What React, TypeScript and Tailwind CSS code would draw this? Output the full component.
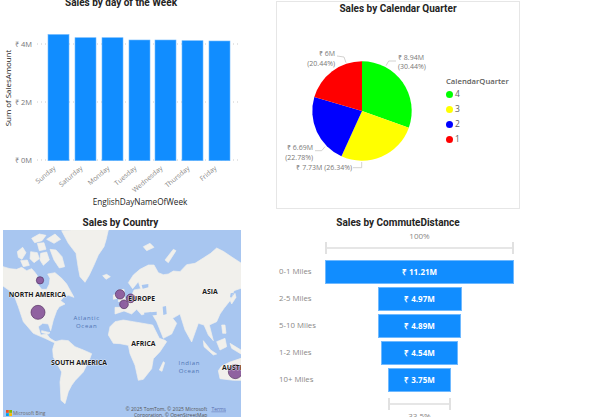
import React from "react";

const days = [
  { name: "Sunday", x: 48, top: 34.5 },
  { name: "Saturday", x: 75, top: 37.7 },
  { name: "Monday", x: 102, top: 37.7 },
  { name: "Tuesday", x: 129, top: 40 },
  { name: "Wednesday", x: 155, top: 40 },
  { name: "Thursday", x: 182, top: 40.7 },
  { name: "Friday", x: 209, top: 41 },
];

const quarters = [
  { label: "4", pct: 30.44, color: "#00ff00" },
  { label: "3", pct: 26.34, color: "#ffff00" },
  { label: "2", pct: 22.78, color: "#0000ff" },
  { label: "1", pct: 20.44, color: "#ff0000" },
];

const commute = [
  { label: "0-1 Miles", value: "₹ 11.21M", width: 189 },
  { label: "2-5 Miles", value: "₹ 4.97M", width: 84 },
  { label: "5-10 Miles", value: "₹ 4.89M", width: 83 },
  { label: "1-2 Miles", value: "₹ 4.54M", width: 77 },
  { label: "10+ Miles", value: "₹ 3.75M", width: 63 },
];

const land = [
  // north america
  "9,170 30,176 50,178 65,172 80,182 95,176 104,186 112,197 108,216 125,238 140,238 148,222 150,205 143,192 165,188 185,205 200,222 222,262 205,256 190,262 182,272 195,282 178,290 170,302 160,330 152,362 145,342 128,340 115,350 122,375 140,372 150,385 172,398 160,397 135,385 100,370 70,335 55,290 40,250 9,228",
  // south america
  "165,395 185,390 205,392 225,410 250,420 275,431 270,445 250,486 225,512 215,526 205,545 195,581 183,571 180,516 185,486 160,441 158,418",
  // greenland
  "185,62 215,60 325,60 318,90 312,110 295,135 282,165 268,195 255,217 240,200 235,175 228,130 205,100",
  // arctic islands
  "52,125 68,112 78,128 66,148 55,142",
  "62,152 82,150 88,166 70,170",
  "95,85 118,72 138,76 126,92 104,98",
  "112,100 132,98 138,118 118,122",
  "92,125 112,128 118,146 102,158 90,146",
  "122,130 140,126 148,150 130,166 120,150",
  "150,118 168,120 186,140 194,170 178,174 162,150",
  "140,88 165,72 182,88 162,100",
  // eurasia
  "345,312 345,292 372,292 375,268 395,257 402,240 422,236 415,215 398,236 385,218 400,195 420,178 445,165 462,165 475,188 490,194 505,192 520,183 540,185 560,164 585,160 610,144 632,130 650,114 670,124 700,144 723,159 723,235 702,242 690,272 672,295 660,312 650,335 628,345 640,392 625,375 612,345 595,340 575,396 555,360 540,312 518,325 530,340 515,372 490,385 470,335 452,305 425,315 410,298 395,312 372,303",
  // africa
  "325,375 330,350 345,335 370,330 400,335 458,345 478,385 495,391 500,395 480,425 460,446 455,476 430,508 415,511 405,466 390,431 385,406 360,401 340,400",
  // madagascar
  "490,455 494,458 486,484 478,480",
  // uk, ireland
  "356,240 372,238 375,270 355,275",
  "340,255 350,252 350,266 340,268",
  // iceland
  "308,197 320,193 331,200 318,208",
  // novaya zemlya, svalbard
  "495,150 520,118 528,122 505,158",
  "430,110 450,100 462,112 440,122",
  // indonesia, japan, philippines
  "610,392 632,420 650,432 640,435 612,410",
  "650,395 675,385 680,410 660,420",
  "690,400 723,420 723,432 695,415",
  "690,270 705,250 708,262 695,282",
  "665,345 675,345 678,370 668,370",
  // cuba
  "125,362 150,368 145,372 125,368",
  // australia
  "723,445 690,456 665,468 655,482 660,506 700,511 723,511",
];

const water = [
  "425,225 445,222 445,232 428,236",
  "432,308 470,305 470,315 435,318",
  "488,290 498,288 500,312 490,315",
  "692,250 700,248 695,262 690,262",
];

const bubbles = [
  { x: 120, y: 211, r: 11 },
  { x: 114, y: 307, r: 21 },
  { x: 360, y: 253, r: 14 },
  { x: 392, y: 265, r: 13 },
  { x: 372, y: 283, r: 13 },
  { x: 706, y: 485, r: 21 },
];

const mapLabels = [
  { text: "NORTH AMERICA", x: 112, y: 262 },
  { text: "EUROPE", x: 425, y: 272 },
  { text: "ASIA", x: 630, y: 253 },
  { text: "AFRICA", x: 430, y: 408 },
  { text: "SOUTH AMERICA", x: 237, y: 465 },
  { text: "AUSTI", x: 696, y: 480 },
];

const titleClass =
  "font-['Roboto',sans-serif] font-bold text-[10px] text-[#252423] text-center leading-[14px] whitespace-nowrap";

function slicePath(start: number, end: number) {
  const cx = 362;
  const cy = 111;
  const r = 49.7;
  const a0 = (start / 100) * Math.PI * 2;
  const a1 = (end / 100) * Math.PI * 2;
  const x0 = cx + r * Math.sin(a0);
  const y0 = cy - r * Math.cos(a0);
  const x1 = cx + r * Math.sin(a1);
  const y1 = cy - r * Math.cos(a1);
  return `M${cx} ${cy}L${x0} ${y0}A${r} ${r} 0 0 1 ${x1} ${y1}Z`;
}

const BarChart = () => (
  <div className="flex flex-col h-[210px]">
    <div className={`${titleClass} -mt-[4px] h-[13px] pl-[1px]`}>Sales by day of the Week</div>
    <svg
      width="241"
      height="201"
      viewBox="0 9 241 201"
      className="font-['Open_Sans',sans-serif]"
    >
      {[44, 102, 160].map((y) => (
        <line key={y} x1="37" x2="241" y1={y} y2={y} stroke="#cccccc" strokeWidth="1" strokeDasharray="1 3" />
      ))}
      {days.map((d) => (
        <rect key={d.name} x={d.x} y={d.top} width="21" height={160.7 - d.top} fill="#118dff" stroke="#6fb9ff" strokeWidth="0.6" />
      ))}
      {[
        { t: "₹ 4M", y: 47 },
        { t: "₹ 2M", y: 105 },
        { t: "₹ 0M", y: 163 },
      ].map((a) => (
        <text key={a.t} x="32" y={a.y} textAnchor="end" fontSize="7.5" fill="#77767a">
          {a.t}
        </text>
      ))}
      {days.map((d) => (
        <text
          key={d.name}
          x={d.x + 8}
          y={169}
          textAnchor="end"
          fontSize="6.8"
          fill="#8a8886"
          transform={`rotate(-40 ${d.x + 8} 169)`}
        >
          {d.name}
        </text>
      ))}
      <text x="140" y="205" textAnchor="middle" fontSize="8.2" fill="#252423">
        EnglishDayNameOfWeek
      </text>
      <text x="11" y="88" textAnchor="middle" fontSize="7.9" fill="#252423" transform="rotate(-90 11 88)">
        Sum of SalesAmount
      </text>
    </svg>
  </div>
);

const PieChart = () => {
  let acc = 0;
  return (
    <div className="h-[208px] mt-px border border-[#e6e6e6] flex flex-col">
      <div className={`${titleClass} text-[10.3px]`}>Sales by Calendar Quarter</div>
      <div className="flex">
        <svg width="165" height="190" viewBox="277 16 165 190" className="font-['Open_Sans',sans-serif] shrink-0">
          {quarters.map((q) => {
            const d = slicePath(acc, acc + q.pct);
            acc += q.pct;
            return <path key={q.label} d={d} fill={q.color} />;
          })}
          <g fill="none" stroke="#c8c6c4" strokeWidth="0.8">
            <polyline points="386,65.7 388.7,61 396,61" />
            <polyline points="346,62.7 344,57 337,56" />
            <polyline points="325,146.7 321.7,150.7 315,150.7" />
            <polyline points="361.7,162 361.7,167.7 353,167.7" />
          </g>
          <g fontSize="7" fill="#7a7876">
            <text x="398" y="60">₹ 8.94M</text>
            <text x="398" y="69">(30.44%)</text>
            <text x="335" y="56" textAnchor="end">₹ 6M</text>
            <text x="335" y="66" textAnchor="end">(20.44%)</text>
            <text x="313" y="150" textAnchor="end">₹ 6.69M</text>
            <text x="313" y="160" textAnchor="end">(22.78%)</text>
            <text x="352" y="170" textAnchor="end">₹ 7.73M (26.34%)</text>
          </g>
        </svg>
        <div className="flex flex-col ml-[4px] mt-[59px] font-['Open_Sans',sans-serif]">
          <div className="text-[7.7px] font-semibold text-[#605e5c] leading-[12px]">CalendarQuarter</div>
          {quarters.map((q) => (
            <div key={q.label} className="flex items-center gap-[2px] h-[15px] text-[8.5px] text-[#605e5c]">
              <span className="w-[7px] h-[7px] rounded-full" style={{ background: q.color }} />
              {q.label}
            </div>
          ))}
        </div>
      </div>
    </div>
  );
};

const MapVisual = () => (
  <div className="flex flex-col items-center">
    <div className={`${titleClass} pt-[6px] h-[20px] text-[10.3px]`}>Sales by Country</div>
    <svg
      width="238"
      height="187"
      viewBox="9 60 714 561"
      className="self-start ml-[3px] bg-[#a8c6f0] font-['Open_Sans',sans-serif]"
    >
      <g fill="#f1f0ec" stroke="#f1f0ec" strokeWidth="2" strokeLinejoin="round" className="blur-[0.4px]">
        {land.map((p) => (
          <polygon key={p} points={p} />
        ))}
      </g>
      <g fill="#a8c6f0" className="blur-[0.4px]">
        {water.map((p) => (
          <polygon key={p} points={p} />
        ))}
      </g>
      {bubbles.map((b) => (
        <circle key={b.x} cx={b.x} cy={b.y} r={b.r} fill="#8a5a9c" fillOpacity="0.95" stroke="#54315f" strokeWidth="2" />
      ))}
      <g fontSize="20.5" fontWeight="700" fill="#1b1a19" textAnchor="middle" stroke="#ffffff" strokeWidth="2" paintOrder="stroke" strokeLinejoin="round">
        {mapLabels.map((l) => (
          <text key={l.text} x={l.x} y={l.y}>
            {l.text}
          </text>
        ))}
      </g>
      <g fontSize="18" fill="#4f74b3" textAnchor="middle" letterSpacing="2">
        <text x="260" y="331">Atlantic</text>
        <text x="260" y="353">Ocean</text>
        <text x="568" y="466">Indian</text>
        <text x="568" y="488">Ocean</text>
      </g>
      <rect x="18" y="600" width="8.5" height="8.5" fill="#f25022" />
      <rect x="27.5" y="600" width="8.5" height="8.5" fill="#7fba00" />
      <rect x="18" y="609.5" width="8.5" height="8.5" fill="#00a4ef" />
      <rect x="27.5" y="609.5" width="8.5" height="8.5" fill="#ffb900" />
      <text x="39" y="615" fontSize="14.5" fill="#6a6a6a">Microsoft Bing</text>
      <g fontSize="15" fill="#555555" textAnchor="end">
        <text x="622" y="602">© 2025 TomTom, © 2025 Microsoft</text>
        <text x="678" y="602" fill="#5a6fb0" textDecoration="underline">Terms</text>
        <text x="622" y="620">Corporation, © OpenStreetMap</text>
      </g>
    </svg>
  </div>
);

const Bracket = ({ width }: { width: number }) => (
  <div className="h-[12px] border-x-2 border-[#e1e1e1] flex items-center" style={{ width }}>
    <div className="w-full h-[2px] bg-[#e6e6e6]" />
  </div>
);

const Funnel = () => (
  <div className="flex flex-col font-['Open_Sans',sans-serif]">
    <div className={`${titleClass} pt-[6px] h-[20px] text-[10.3px]`}>Sales by CommuteDistance</div>
    <div className="flex">
      <div className="w-[49px] shrink-0" />
      <div className="w-[189px] flex flex-col items-center">
        <div className="text-[8px] text-[#8a8886] leading-[12px] h-[12px]">100%</div>
        <Bracket width={189} />
      </div>
    </div>
    <div className="flex flex-col gap-[3px] mt-[6px]">
      {commute.map((c) => (
        <div key={c.label} className="flex h-[24px]">
          <div className="w-[49px] shrink-0 pl-[3px] text-[7.8px] text-[#8a8886] leading-[23px]">{c.label}</div>
          <div className="w-[189px] flex justify-center">
            <div
              className="bg-[#118dff] border border-[#6fb9ff] text-white text-[8px] font-bold flex items-center justify-center"
              style={{ width: c.width }}
            >
              {c.value}
            </div>
          </div>
        </div>
      ))}
    </div>
    <div className="flex mt-[6px]">
      <div className="w-[49px] shrink-0" />
      <div className="w-[189px] flex flex-col items-center">
        <Bracket width={63} />
        <div className="text-[8px] text-[#8a8886] leading-[12px]">33.5%</div>
      </div>
    </div>
  </div>
);

export default function App() {
  return (
    <div className="w-[603px] h-[417px] overflow-hidden bg-white">
      <div className="grid grid-cols-[241px_244px] grid-rows-[210px_207px] gap-x-[35px]">
        <BarChart />
        <PieChart />
        <MapVisual />
        <Funnel />
      </div>
    </div>
  );
}
